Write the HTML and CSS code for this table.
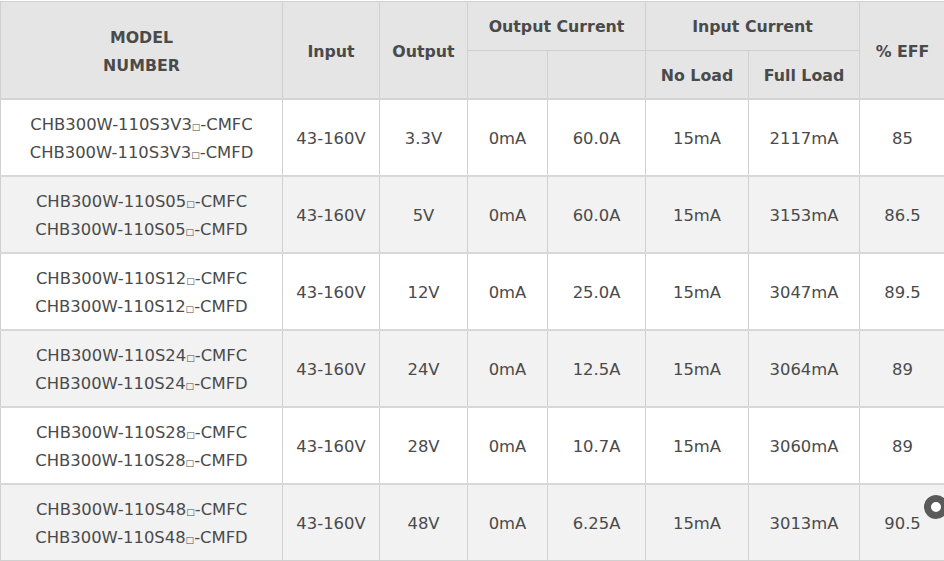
FILE: index.html
```html
<!DOCTYPE html>
<html>
<head>
<meta charset="utf-8">
<link rel="stylesheet" href="styles.css">
</head>
<body>
<div class="wrap">
<table class="spec">
<colgroup>
<col class="c1"><col class="c2"><col class="c3"><col class="c4"><col class="c5"><col class="c6"><col class="c7"><col class="c8">
</colgroup>
<thead>
<tr class="h1">
<th rowspan="2" class="tall">MODEL<br>NUMBER</th>
<th rowspan="2" class="tall">Input</th>
<th rowspan="2" class="tall">Output</th>
<th colspan="2">Output Current</th>
<th colspan="2">Input Current</th>
<th rowspan="2" class="tall">% EFF</th>
</tr>
<tr class="h2">
<th></th><th></th>
<th>No Load</th><th>Full Load</th>
</tr>
</thead>
<tbody>
<tr><td>CHB300W-110S3V3<span class="sq">□</span>-CMFC<br>CHB300W-110S3V3<span class="sq">□</span>-CMFD</td><td>43-160V</td><td>3.3V</td><td>0mA</td><td>60.0A</td><td>15mA</td><td>2117mA</td><td>85</td></tr>
<tr><td>CHB300W-110S05<span class="sq">□</span>-CMFC<br>CHB300W-110S05<span class="sq">□</span>-CMFD</td><td>43-160V</td><td>5V</td><td>0mA</td><td>60.0A</td><td>15mA</td><td>3153mA</td><td>86.5</td></tr>
<tr><td>CHB300W-110S12<span class="sq">□</span>-CMFC<br>CHB300W-110S12<span class="sq">□</span>-CMFD</td><td>43-160V</td><td>12V</td><td>0mA</td><td>25.0A</td><td>15mA</td><td>3047mA</td><td>89.5</td></tr>
<tr><td>CHB300W-110S24<span class="sq">□</span>-CMFC<br>CHB300W-110S24<span class="sq">□</span>-CMFD</td><td>43-160V</td><td>24V</td><td>0mA</td><td>12.5A</td><td>15mA</td><td>3064mA</td><td>89</td></tr>
<tr><td>CHB300W-110S28<span class="sq">□</span>-CMFC<br>CHB300W-110S28<span class="sq">□</span>-CMFD</td><td>43-160V</td><td>28V</td><td>0mA</td><td>10.7A</td><td>15mA</td><td>3060mA</td><td>89</td></tr>
<tr><td>CHB300W-110S48<span class="sq">□</span>-CMFC<br>CHB300W-110S48<span class="sq">□</span>-CMFD</td><td>43-160V</td><td>48V</td><td>0mA</td><td>6.25A</td><td>15mA</td><td>3013mA</td><td>90.5</td></tr>
</tbody>
</table>
<div class="ring"></div>
</div>
</body>
</html>
```
FILE: styles.css
```css
html, body {
  margin: 0;
  padding: 0;
  background: #ffffff;
}
.wrap {
  position: relative;
  width: 944px;
  height: 561px;
  overflow: hidden;
}
.spec {
  border-collapse: collapse;
  table-layout: fixed;
  width: 945px;
  margin-top: 1px;
  font-family: "DejaVu Sans", Verdana, sans-serif;
  color: #444444;
}
.c1 { width: 282px; }
.c2 { width: 97px; }
.c3 { width: 88px; }
.c4 { width: 80px; }
.c5 { width: 98px; }
.c6 { width: 103px; }
.c7 { width: 111px; }
.c8 { width: 86px; }
.spec th, .spec td {
  border: 1px solid #d0d0d0;
  text-align: center;
  vertical-align: middle;
  padding: 0;
}
.spec th {
  background: #e5e5e5;
  font-weight: bold;
  font-size: 15.8px;
  line-height: 28px;
  color: #4a4a4a;
}
.spec tr.h1 { height: 49px; }
.spec tr.h1 th { padding-top: 2px; }
.spec tr.h1 th.tall { padding-top: 4px; }
.spec tr.h2 { height: 48px; }
.spec tr.h2 th { padding-top: 4px; }
.spec thead tr.h2 th { border-top-color: #cccccc; }
.spec thead { border-bottom: 2px solid #d4d4d4; }
.spec tbody tr {
  height: 77px;
}
.spec tbody td {
  padding-top: 3px;
}
.spec tbody tr + tr td {
  border-top: 2px solid #d8d8d8;
}
.spec tbody tr:nth-child(even) td {
  background: #f2f2f2;
}
.spec td {
  font-size: 16.4px;
  line-height: 28px;
  color: #4a4a4a;
}
.sq {
  font-size: 9px;
  line-height: 0;
  vertical-align: baseline;
}
.ring {
  position: absolute;
  left: 924px;
  top: 495px;
  width: 10px;
  height: 10px;
  border: 7px solid #5a5a5a;
  border-radius: 50%;
  background: #ffffff;
}
```
